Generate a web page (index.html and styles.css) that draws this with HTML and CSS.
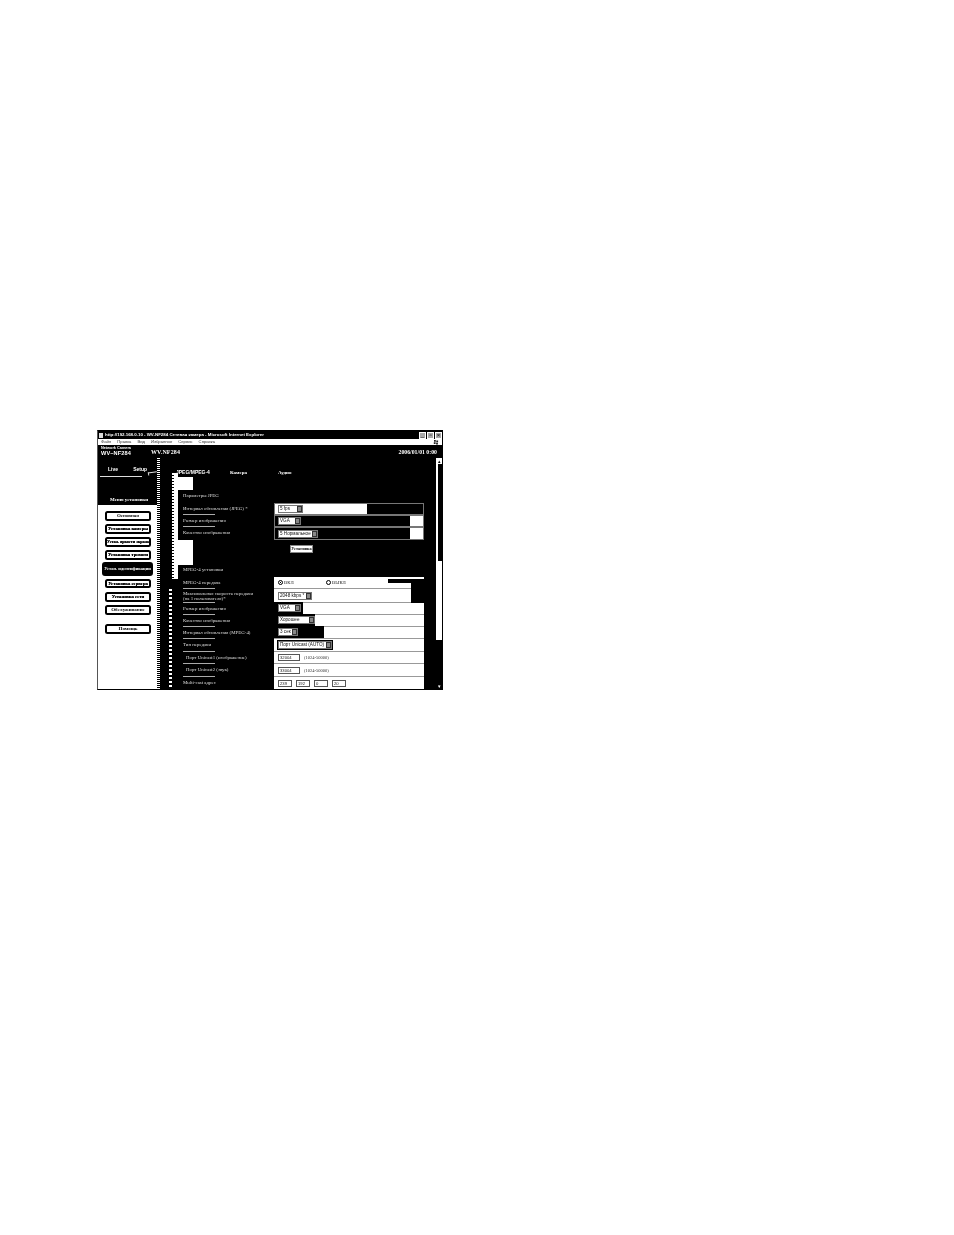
FILE: index.html
```html
<!DOCTYPE html>
<html lang="ru">
<head>
<meta charset="utf-8">
<title>WV-NF284</title>
<link rel="stylesheet" href="styles.css">
</head>
<body>
<div class="window">
  <div class="titlebar">
    <span class="ie-icon"></span>
    <span class="title-text">http://192.168.0.10 - WV-NF284 Сетевая камера - Microsoft Internet Explorer</span>
    <span class="win-btns"><i>_</i><i>▫</i><i>×</i></span>
  </div>
  <div class="menubar">
    <span>Файл</span><span>Правка</span><span>Вид</span><span>Избранное</span><span>Сервис</span><span>Справка</span>
    <svg class="flag" viewBox="0 0 6 6"><path d="M1 1h1.800v1.800H1zM3.300 1.400h1.800v1.800H3.300zM.8 3.300h1.800v1.800H.8zM3.100 3.700h1.800v1.700H3.100z"/></svg>
  </div>
  <div class="viewport">
    <div class="header">
      <div class="brand"><small>Network Camera</small><b>WV−NF284</b></div>
      <div class="model">WV.NF284</div>
      <div class="date">2006/01/01 0:00</div>
    </div>
    <div class="content">
      <aside class="side">
        <div class="tabs"><span class="tab">Live</span><span class="tab setup">Setup</span><span class="tab-curve"></span></div>
        <div class="side-title">Меню установки</div>
        <nav class="panel">
          <a class="btn">Основная</a>
          <a class="btn wide">Установка камеры</a>
          <a class="btn wide tight">Устан. яркости экрана</a>
          <a class="btn wide">Установка тревоги</a>
          <a class="btn active">Устан. идентификации</a>
          <a class="btn wide">Установка сервера</a>
          <a class="btn wide">Установка сети</a>
          <a class="btn">Обслуживание</a>
          <a class="btn help">Помощь</a>
        </nav>
      </aside>
      <div class="gutter">
        <div class="strip upper"></div>
        <div class="strip lower"></div>
      </div>
      <main class="main">
        <div class="subtabs"><span>JPEG/MPEG-4</span><span>Камера</span><span>Аудио</span></div>
        <div class="stub top-stub"></div>
        <div class="label section">Параметры JPEG</div>

        <div class="row h12"><div class="label ruled">Интервал обновления (JPEG) *</div>
          <div class="cell dark"><div class="fill to-367"><span class="select"><em>5 fps</em><u></u></span></div></div></div>
        <div class="row h12"><div class="label ruled">Размер изображения</div>
          <div class="cell dark"><span class="select s-vga"><em>VGA</em><u></u></span><div class="gap"></div><div class="white-end"></div></div></div>
        <div class="row h13"><div class="label">Качество изображения</div>
          <div class="cell dark"><span class="select s-q"><em>5 Нормальное</em><u></u></span><div class="gap"></div><div class="white-end"></div></div></div>

        <div class="row submit-row"><div class="stub"></div><div class="submit-cell"><span class="submit">Установка</span></div></div>

        <div class="label section mpeg">MPEG-4 установки</div>
        <div class="row h12"><div class="label ruled">MPEG-4 передача</div>
          <div class="cell radios"><span class="radio on">ВКЛ</span><span class="radio">ВЫКЛ</span><div class="notch"></div></div></div>
        <div class="row h14"><div class="label ruled two">Максимальная скорость передачи<br>(на 1 пользователя)*</div>
          <div class="cell"><span class="select s-rate"><em>2048 kbps *</em><u></u></span><div class="black-end"></div></div></div>
        <div class="row h12"><div class="label ruled">Размер изображения</div>
          <div class="cell"><div class="dark-box w29"><span class="select s-vga"><em>VGA</em><u></u></span></div></div></div>
        <div class="row h12"><div class="label ruled">Качество изображения</div>
          <div class="cell"><div class="dark-box w41"><span class="select s-good"><em>Хорошее</em><u></u></span></div></div></div>
        <div class="row h12"><div class="label ruled">Интервал обновления (MPEG-4)</div>
          <div class="cell"><div class="dark-box w50"><span class="select s-sec"><em>3 сек</em><u></u></span></div></div></div>
        <div class="row h13"><div class="label ruled">Тип передачи</div>
          <div class="cell"><span class="select s-type"><em>Порт  Unicast (AUTO)</em><u></u></span></div></div>
        <div class="row h12"><div class="label ruled indent">Порт  Unicast1 (изображение)</div>
          <div class="cell"><span class="input w22">32004</span><span class="hint">(1024-50000)</span></div></div>
        <div class="row h13"><div class="label ruled indent">Порт  Unicast2 (звук)</div>
          <div class="cell"><span class="input w22">33004</span><span class="hint">(1024-50000)</span></div></div>
        <div class="row h13"><div class="label">Multi-cast адрес</div>
          <div class="cell ips"><span class="input w14">239</span><span class="input w14">192</span><span class="input w14">0</span><span class="input w14">20</span></div></div>
      </main>
      <div class="scrollbar">
        <span class="arrow">▴</span>
        <div class="track"></div>
        <span class="arrow low">▾</span>
      </div>
    </div>
  </div>
</div>
</body>
</html>
```
FILE: styles.css
```css
html, body { margin: 0; padding: 0; background: #fff; }
body { height: 1235px; padding: 430px 0 0 97px; box-sizing: border-box; font-family: "Liberation Serif", serif; }

.window { width: 346px; height: 260px; box-sizing: border-box; border: 1px solid #000; border-left-color: #555; display: flex; flex-direction: column; background: #000; overflow: hidden; color: #fff; filter: blur(.25px); }

.titlebar { height: 8px; flex: none; display: flex; align-items: center; gap: 2px; padding: 0 0 0 1px; font: bold 4.400px/8px "Liberation Sans", sans-serif; }
.ie-icon { width: 4px; height: 5px; background: #ddd; }
.title-text { flex: 1; white-space: nowrap; }
.win-btns { display: flex; gap: 1px; }
.win-btns i { width: 7px; height: 7px; background: #aaa; border: 1px solid #fff; box-sizing: border-box; color: #000; font: 6px/5px "Liberation Sans", sans-serif; text-align: center; }

.menubar { height: 6px; flex: none; background: #fff; color: #333; display: flex; gap: 6px; padding-left: 3px; align-items: center; font: 4.200px/6px "Liberation Sans", sans-serif; }
.flag { margin-left: auto; width: 6px; height: 6px; margin-right: 3px; fill: #222; }

.viewport { flex: 1; display: flex; flex-direction: column; min-height: 0; }
.header { height: 13px; flex: none; display: flex; align-items: flex-start; }
.brand { width: 53px; padding: 1px 0 0 3px; box-sizing: border-box; display: flex; flex-direction: column; font-family: "Liberation Sans", sans-serif; line-height: 4px; }
.brand small { font-size: 3.800px; font-weight: bold; }
.brand b { font-size: 5.600px; line-height: 6px; letter-spacing: .02em; }
.model { font-weight: bold; font-size: 6px; line-height: 7px; padding-top: 4px; letter-spacing: .02em; }
.date { margin-left: auto; margin-right: 5px; font-weight: bold; font-size: 5.800px; line-height: 7px; padding-top: 4px; }

.content { flex: 1; display: flex; min-height: 0; }

.side { width: 59px; flex: none; display: flex; flex-direction: column; }
.tabs { height: 20px; flex: none; display: flex; font: bold 5px/7px "Liberation Sans", sans-serif; }
.tab { width: 34px; height: 19px; box-sizing: border-box; padding: 8px 0 0 8px; margin-left: 2px; border-bottom: 1px solid #ddd; }
.tab.setup { width: 9px; margin-left: 0; padding-left: 0; white-space: nowrap; }
.tab-curve { width: 9px; height: 3px; margin: 14px 0 0 6px; box-sizing: border-box; border-top: 1px solid #ddd; border-left: 1px solid #ddd; transform: rotate(-8deg); }
.side-title { height: 27px; flex: none; box-sizing: border-box; padding: 18px 0 0 12px; font-size: 5px; font-weight: bold; line-height: 7px; white-space: nowrap; }

.panel { flex: 1; background: #fff; display: flex; flex-direction: column; gap: 3.600px; padding: 6px 0 0 7px; box-sizing: border-box; }
.btn { width: 46px; height: 9.500px; flex: none; box-sizing: border-box; border: 2px solid #000; border-radius: 2.500px; color: #000; background: #fff; font-size: 5px; font-weight: bold; line-height: 5.500px; text-align: center; white-space: nowrap; overflow: hidden; }
.btn.wide { font-size: 4.700px; text-shadow: 0 0 .5px #000; }
.btn.tight { font-size: 4.100px; }
.btn.active { width: 51px; height: 14px; margin: -1px 0 -1px -3px; background: #000; color: #fff; border-radius: 3px; line-height: 10px; font-size: 4.500px; }
.btn.help { margin-top: 6px; }

.gutter { width: 21px; flex: none; display: flex; flex-direction: column; background-image: repeating-linear-gradient(#fff 0 1px, #000 1px 2px); background-size: 3px 100%; background-repeat: no-repeat; }
.strip { background: #fff; }
.strip.upper { margin: 15px 0 0 15px; height: 107px; background: repeating-linear-gradient(#fff 0 2px, #000 2px 3px) left / 2px 100% no-repeat, #fff; }
.strip.lower { margin: 10px 0 0 12px; height: 100px; width: 3px; background: repeating-linear-gradient(#fff 0 2px, #000 2px 4px); }

.main { width: 246px; flex: none; display: flex; flex-direction: column; font-size: 4.900px; }
.subtabs { height: 19px; flex: none; display: flex; font-weight: bold; padding: 11px 0 0 0; box-sizing: border-box; line-height: 7px; font-size: 5px; white-space: nowrap; margin-left: -2px; }
.subtabs span:first-child { width: 54px; font-family: "Liberation Sans", sans-serif; }
.subtabs span:nth-child(2) { width: 48px; }

.stub { width: 15px; background: #fff; }
.top-stub { height: 13px; flex: none; }
.label { width: 96px; flex: none; box-sizing: border-box; padding-left: 5px; line-height: 6px; color: #ddd; white-space: nowrap; position: relative; }
.label.section { height: 13px; padding-top: 3px; }
.label.mpeg { height: 12px; padding-top: 2px; }
.label.ruled::after { content: ""; position: absolute; left: 5px; bottom: 0; width: 32px; height: 1px; background: #aaa; }
.label.indent { padding-left: 8px; }
.label.two { line-height: 5px; padding-top: 2px; }

.row { display: flex; flex: none; align-items: stretch; }
.row > .label { padding-top: 3px; }
.row > .label.two { padding-top: 2px; }
.h12 { height: 12px; } .h13 { height: 13px; } .h14 { height: 14px; }
.submit-row { height: 25px; }
.submit-row .stub { flex: none; }
.submit-cell { margin-left: 97px; padding-top: 5px; }
.submit { display: block; width: 23px; height: 8px; box-sizing: border-box; background: #fff; color: #000; border: 1px solid #888; font-size: 4.300px; font-weight: bold; line-height: 6px; text-align: center; }

.cell { width: 150px; flex: none; box-sizing: border-box; background: #fff; color: #222; border-bottom: 1px solid #999; display: flex; align-items: center; padding-left: 4px; position: relative; }
.cell.dark { background: #000; border: 1px solid #777; padding-left: 0; }
.fill { background: #fff; height: 100%; display: flex; align-items: center; padding-left: 3px; box-sizing: border-box; }
.to-367 { width: 92px; }
.cell.dark > .select { margin-left: 3px; }
.gap { flex: 1; }
.white-end { width: 13px; height: 100%; background: #fff; }
.black-end { position: absolute; right: 0; top: -1px; width: 13px; height: 15px; background: #000; }

.select { display: inline-flex; align-items: center; height: 8px; box-sizing: border-box; border: 1px solid #777; background: #fff; color: #111; font: 4.600px/6px "Liberation Sans", sans-serif; white-space: nowrap; padding-left: 1px; justify-content: space-between; overflow: hidden; }
.select em { font-style: normal; }
.select u { flex: none; width: 5px; height: 6px; background: #888; border: 1px solid #333; box-sizing: border-box; }
.fill .select { width: 25px; }
.s-vga { width: 23px; }
.s-q { width: 40px; }
.s-rate { width: 34px; }
.s-good { width: 37px; }
.s-sec { width: 20px; }
.s-type { width: 54px; outline: 1px solid #000; }

.dark-box { background: #000; height: calc(100% + 1px); margin: -1px 0 0 -4px; display: flex; align-items: center; padding-left: 4px; box-sizing: border-box; }
.w29 { width: 29px; } .w41 { width: 41px; } .w50 { width: 50px; }

.radios { gap: 0; }
.radio { width: 48px; display: flex; align-items: center; gap: 1px; font-size: 4.800px; line-height: 6px; }
.radio::before { content: ""; width: 5px; height: 5px; box-sizing: border-box; border: 1px solid #000; border-radius: 50%; }
.radio.on::before { background: radial-gradient(#000 40%, #fff 45%); }
.notch { position: absolute; right: 0; top: 2px; width: 36px; height: 4px; background: #000; }
.notch::after { content: ""; position: absolute; right: 0; top: 100%; width: 13px; height: 7px; background: #000; }

.input { display: inline-block; height: 7px; box-sizing: border-box; border: 1px solid #555; background: #fff; color: #222; font: 4.200px/5px "Liberation Sans", sans-serif; padding-left: 1px; overflow: hidden; }
.w22 { width: 22px; }
.w14 { width: 14px; }
.hint { margin-left: 4px; font-size: 4.500px; color: #333; }
.ips { gap: 4px; }

.scrollbar { margin-left: 12px; width: 6px; flex: none; display: flex; flex-direction: column; align-items: center; }
.arrow { flex: none; width: 6px; height: 6px; background: #fff; color: #000; font: 5px/6px "Liberation Sans", sans-serif; text-align: center; }
.track { width: 100%; height: 176px; flex: none; box-sizing: border-box; border-left: 2px solid #fff; background: linear-gradient(#000 0 55%, #fff 55%); }
.arrow.low { margin-top: auto; background: #000; color: #fff; }
```
